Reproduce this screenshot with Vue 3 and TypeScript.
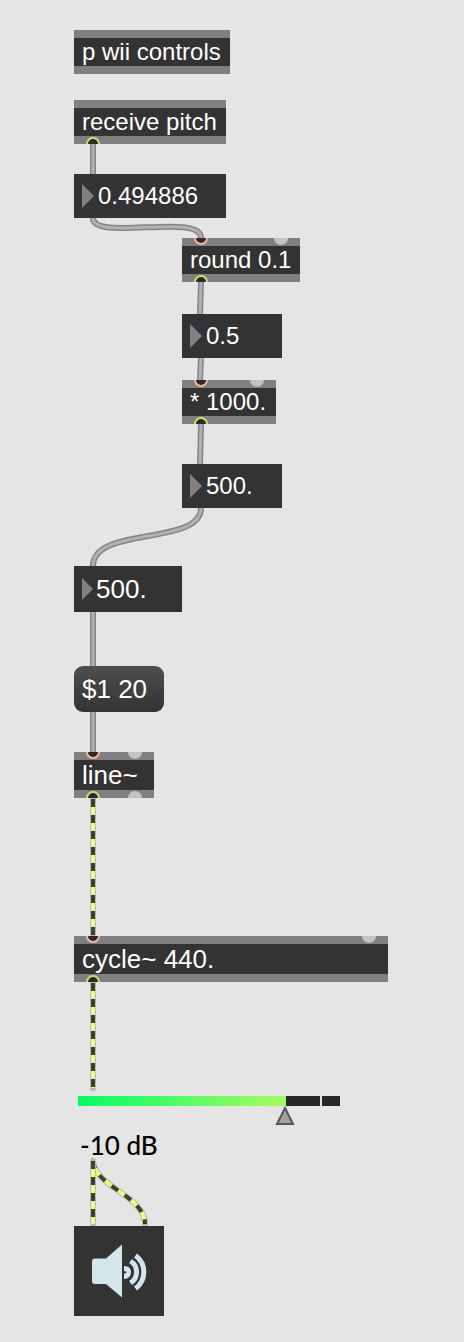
<script setup lang="ts">
import { ref } from 'vue'

interface Port { x: number; hot: boolean }
interface PatchObject {
  id: string
  text: string
  x: number
  y: number
  w: number
  large?: boolean
  inlets: Port[]
  outlets: Port[]
}
interface NumberBox { id: string; label: string; x: number; y: number; w: number; large?: boolean }

const hot = (x: number): Port => ({ x, hot: true })
const cold = (x: number): Port => ({ x, hot: false })

const objects: PatchObject[] = [
  { id: 'wii', text: 'p wii controls', x: 74, y: 30, w: 156, inlets: [], outlets: [] },
  { id: 'receive', text: 'receive pitch', x: 74, y: 100, w: 152, inlets: [], outlets: [hot(19)] },
  { id: 'round', text: 'round 0.1', x: 182, y: 238, w: 118, inlets: [hot(19), cold(99)], outlets: [hot(19)] },
  { id: 'times', text: '* 1000.', x: 182, y: 380, w: 94, inlets: [hot(19), cold(75)], outlets: [hot(19)] },
  { id: 'line', text: 'line~', x: 74, y: 752, w: 80, large: true, inlets: [hot(19), cold(61)], outlets: [hot(19), cold(61)] },
  { id: 'cycle', text: 'cycle~ 440.', x: 74, y: 936, w: 314, large: true, inlets: [hot(19), cold(295)], outlets: [hot(19)] },
]

const numbers: NumberBox[] = [
  { id: 'pitch', label: 'Received pitch', x: 74, y: 174, w: 152 },
  { id: 'rounded', label: 'Rounded pitch', x: 182, y: 314, w: 100 },
  { id: 'scaled', label: 'Scaled pitch', x: 182, y: 464, w: 100 },
  { id: 'frequency', label: 'Frequency', x: 74, y: 566, w: 108, large: true },
]
const values = ref<Record<string, string>>({
  pitch: '0.494886',
  rounded: '0.5',
  scaled: '500.',
  frequency: '500.',
})

const controlCords: string[] = [
  'M93 144V174',
  'M93 218C93 242 201 212 201 238',
  'M201 282L200 314',
  'M201 358L200 380',
  'M201 424L200 464',
  'M201 508C201 546 93 526 93 566',
  'M93 612V666',
  'M93 712V752',
]
const signalCords: string[] = [
  'M93 799V935',
  'M93 983V1088',
  'M93 1161C95 1187 145 1196 145 1224',
  'M93 1161V1224',
]

const gain = ref(-10)
const audioOn = ref(true)
</script>

<template>
  <main class="patcher">
    <svg class="cords" aria-hidden="true">
      <g v-for="d in controlCords" :key="d">
        <path class="cord-edge" :d="d" />
        <path class="cord-core" :d="d" />
      </g>
      <g v-for="d in signalCords" :key="d">
        <path class="signal-edge" :d="d" />
        <path class="signal-base" :d="d" />
        <path class="signal-dash" :d="d" />
      </g>
    </svg>

    <div
      v-for="o in objects"
      :key="o.id"
      class="object"
      :class="{ large: o.large }"
      :style="{ left: o.x + 'px', top: o.y + 'px', width: o.w + 'px' }"
    >
      <svg class="rail" aria-hidden="true">
        <template v-for="p in o.inlets" :key="p.x">
          <circle v-if="p.hot" class="inlet" :cx="p.x" cy="0" r="6" />
          <circle v-else class="cold" :cx="p.x" cy="0" r="7" />
        </template>
      </svg>
      <span class="object-text">{{ o.text }}</span>
      <svg class="rail" aria-hidden="true">
        <template v-for="p in o.outlets" :key="p.x">
          <circle v-if="p.hot" class="outlet" :cx="p.x" cy="8" r="6" />
          <circle v-else class="cold" :cx="p.x" cy="8" r="7" />
        </template>
      </svg>
    </div>

    <label
      v-for="n in numbers"
      :key="n.id"
      class="number"
      :class="{ large: n.large }"
      :style="{ left: n.x + 'px', top: n.y + 'px', width: n.w + 'px' }"
    >
      <svg class="number-arrow" viewBox="0 0 12 24" preserveAspectRatio="none" aria-hidden="true">
        <path d="M0 0L12 12L0 24Z" />
      </svg>
      <input v-model="values[n.id]" type="text" inputmode="decimal" :aria-label="n.label" />
    </label>

    <button class="message" type="button">$1 20</button>

    <section class="gain">
      <div class="meter">
        <span class="level"></span>
        <span class="headroom"></span>
        <span class="peak"></span>
        <svg class="handle" viewBox="0 0 20 20" aria-hidden="true">
          <path d="M10 2L18 18H2Z" />
        </svg>
        <input v-model.number="gain" type="range" min="-70" max="6" aria-labelledby="gain-value" />
      </div>
      <output id="gain-value" class="gain-value">{{ gain }} dB</output>
    </section>

    <button class="dac" type="button" aria-label="Audio output" :aria-pressed="audioOn" @click="audioOn = !audioOn">
      <svg viewBox="0 0 90 90" aria-hidden="true">
        <path class="cone" d="M21 32.500H32L48 18.500V71.500L32 58H21Q18 58 18 55V35.500Q18 32.500 21 32.500Z" />
        <path class="core" d="M50 40Q57 40 57 46Q57 52.500 50 53V48L53 46L50 45Z" />
        <path class="wave" d="M56.500 35A13 13 0 0 1 56.500 57" />
        <path class="wave" d="M61.500 29.500A20.500 20.500 0 0 1 61.500 62.500" />
      </svg>
    </button>
  </main>
</template>

<style>
body {
  margin: 0;
  background: #e5e5e5;
}
</style>

<style scoped>
.patcher {
  position: relative;
  min-height: 100vh;
  background: #e5e5e5;
  color: #fff;
  font: 24px/28px "Liberation Sans", Arial, sans-serif;
  overflow: hidden;
}
.cords {
  position: absolute;
  inset: 0;
  width: 100%;
  height: 100%;
}
.cords path {
  fill: none;
}
.cord-edge {
  stroke: #858585;
  stroke-width: 6;
}
.cord-core {
  stroke: #b1b1b1;
  stroke-width: 3;
}
.signal-edge {
  stroke: #b9b9b9;
  stroke-width: 6;
  stroke-linecap: round;
}
.signal-base {
  stroke: #e1ff85;
  stroke-width: 4;
}
.signal-dash {
  stroke: #3e412a;
  stroke-width: 4;
  stroke-dasharray: 8 8;
}
.object {
  position: absolute;
  display: flex;
  flex-direction: column;
  background: #333;
}
.rail {
  display: block;
  width: 100%;
  height: 8px;
  background: #808080;
}
.inlet,
.outlet {
  fill: #2b2b2b;
  stroke-width: 2;
}
.inlet {
  stroke: #f8b3a2;
}
.outlet {
  stroke: #d3e069;
}
.cold {
  fill: #c2c3c4;
}
.object-text {
  padding: 0 8px;
  white-space: nowrap;
}
.large {
  font-size: 26px;
  line-height: 30px;
}
.number {
  position: absolute;
  display: flex;
  align-items: center;
  box-sizing: border-box;
  height: 44px;
  padding-left: 8px;
  gap: 4px;
  background: #333;
}
.number.large {
  height: 46px;
  gap: 3px;
}
.number-arrow {
  flex: none;
  width: 12px;
  height: 24px;
  fill: #808080;
}
.large .number-arrow {
  width: 11px;
  height: 22px;
}
.number input {
  flex: 1;
  min-width: 0;
  padding: 0;
  border: 0;
  background: none;
  color: inherit;
  font: inherit;
  outline: none;
}
.message {
  position: absolute;
  left: 74px;
  top: 666px;
  width: 90px;
  height: 46px;
  padding: 0 8px;
  border: 0;
  border-radius: 9px;
  background: linear-gradient(#4e4e4e, #333);
  color: inherit;
  font: inherit;
  font-size: 26px;
  line-height: 30px;
  text-align: left;
  white-space: nowrap;
}
.gain {
  position: absolute;
  left: 78px;
  top: 1096px;
  width: 262px;
}
.meter {
  position: relative;
  display: grid;
  grid-template-columns: 208px 1fr 18px;
  height: 10px;
}
.level {
  background: linear-gradient(90deg, #06fb65, #a9fb62);
}
.headroom,
.peak {
  background: #272727;
}
.headroom {
  margin-right: 2px;
}
.handle {
  position: absolute;
  left: 197px;
  top: 10px;
  width: 20px;
  height: 20px;
  fill: #a0a0a0;
  stroke: #555;
  stroke-width: 2;
}
.meter input {
  position: absolute;
  inset: 0;
  width: 100%;
  height: 30px;
  margin: 0;
  opacity: 0;
}
.gain-value {
  display: block;
  margin: 24px 0 0 2px;
  color: #000;
  font: 500 26px/30px Lato, sans-serif;
}
.dac {
  position: absolute;
  left: 74px;
  top: 1226px;
  width: 90px;
  height: 90px;
  padding: 0;
  border: 0;
  background: #333;
}
.dac svg {
  display: block;
  width: 100%;
}
.cone,
.core {
  fill: #d3e6ea;
}
.wave {
  fill: none;
  stroke: #d3e6ea;
  stroke-width: 5;
}
</style>
